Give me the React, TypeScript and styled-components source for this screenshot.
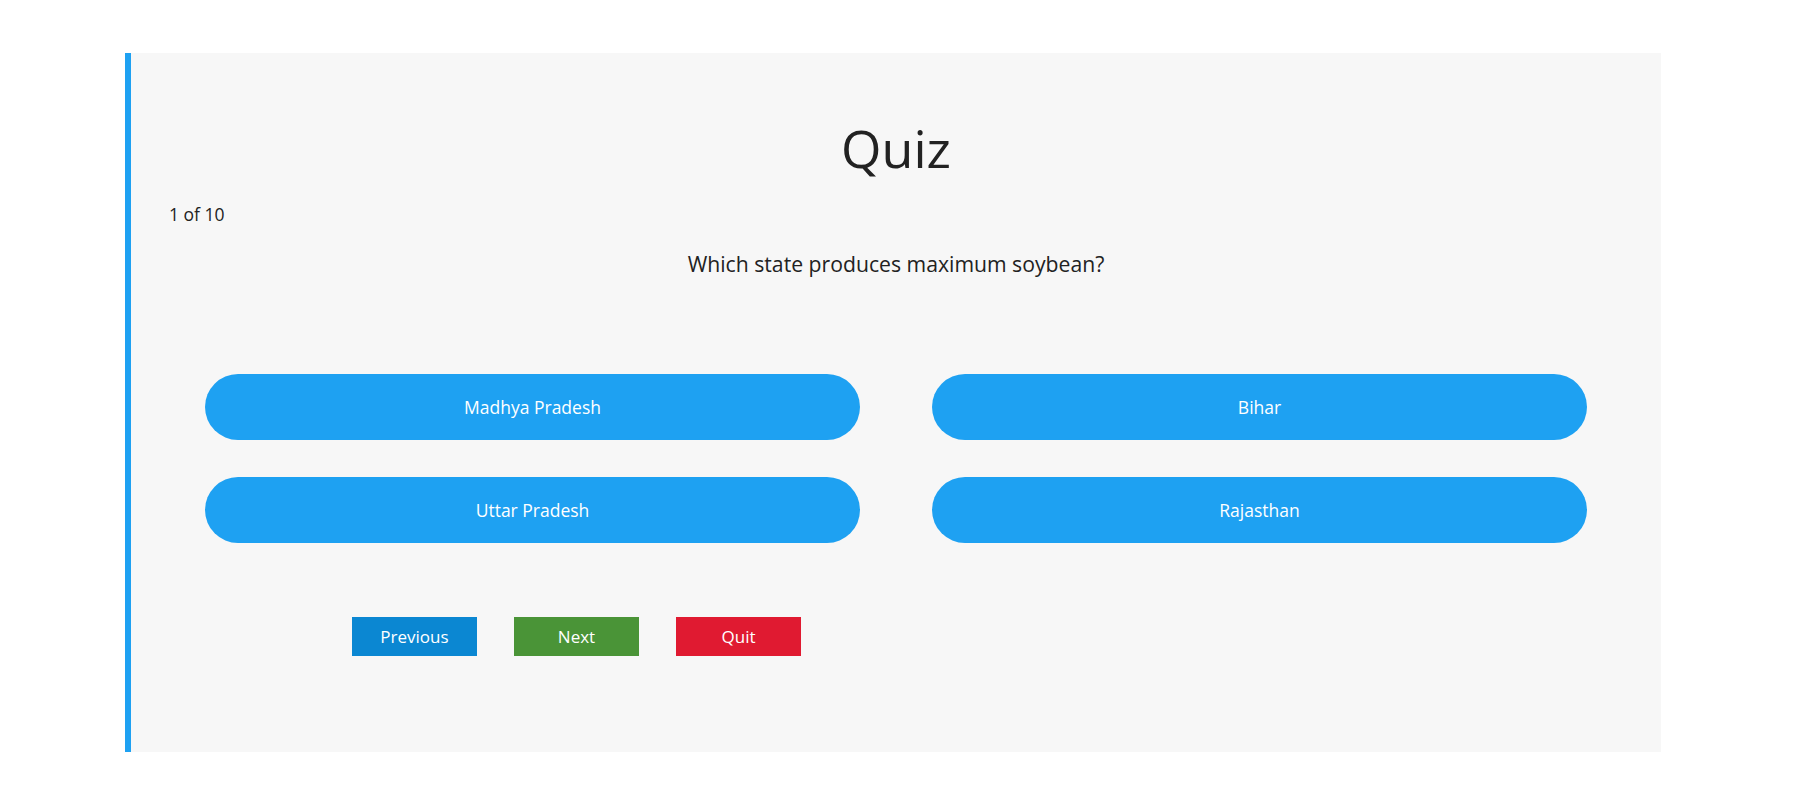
import React from "react";
import styled, { createGlobalStyle } from "styled-components";

const GlobalStyle = createGlobalStyle`
  html, body {
    margin: 0;
    padding: 0;
    background: #ffffff;
  }
  body {
    font-family: "Open Sans", "Noto Sans", Arial, sans-serif;
    color: #222222;
  }
  * { box-sizing: border-box; }
`;

const Card = styled.section`
  margin: 53px 142px 0 125px;
  height: 699px;
  background: #f7f7f7;
  border-left: 6px solid #1ea1f2;
  padding-top: 60px;
  display: flex;
  flex-direction: column;
`;

const Title = styled.h1`
  margin: 0;
  font-size: 52px;
  font-weight: 400;
  line-height: 1.362;
  text-align: center;
  color: #222222;
`;

const Counter = styled.p`
  margin: 19px 0 0 38px;
  font-size: 17.5px;
  line-height: 1.362;
  color: #222222;
`;

const Question = styled.h2`
  margin: 23px 0 0;
  font-size: 21.2px;
  font-weight: 400;
  line-height: 1.362;
  text-align: center;
  color: #222222;
`;

const Options = styled.div`
  margin-top: 95px;
  padding: 0 74px;
  display: grid;
  grid-template-columns: 1fr 1fr;
  column-gap: 72px;
  row-gap: 37px;
`;

const Option = styled.button`
  height: 66px;
  border: none;
  border-radius: 33px;
  background: #1ea1f2;
  color: #ffffff;
  font-family: inherit;
  font-size: 17.5px;
  cursor: pointer;
`;

const Nav = styled.div`
  margin-top: 74px;
  padding-left: 221px;
  display: flex;
  gap: 37px;
`;

const NavButton = styled.button<{ $bg: string }>`
  width: 125px;
  height: 39px;
  border: none;
  border-radius: 0;
  background: ${(p) => p.$bg};
  color: #ffffff;
  font-family: inherit;
  font-size: 17px;
  cursor: pointer;
`;

const options = ["Madhya Pradesh", "Bihar", "Uttar Pradesh", "Rajasthan"];

export default function App() {
  return (
    <>
      <GlobalStyle />
      <Card>
        <Title>Quiz</Title>
        <Counter>1 of 10</Counter>
        <Question>Which state produces maximum soybean?</Question>
        <Options>
          {options.map((o) => (
            <Option key={o}>{o}</Option>
          ))}
        </Options>
        <Nav>
          <NavButton $bg="#0b87d2">Previous</NavButton>
          <NavButton $bg="#4a9437">Next</NavButton>
          <NavButton $bg="#e01a31">Quit</NavButton>
        </Nav>
      </Card>
    </>
  );
}
